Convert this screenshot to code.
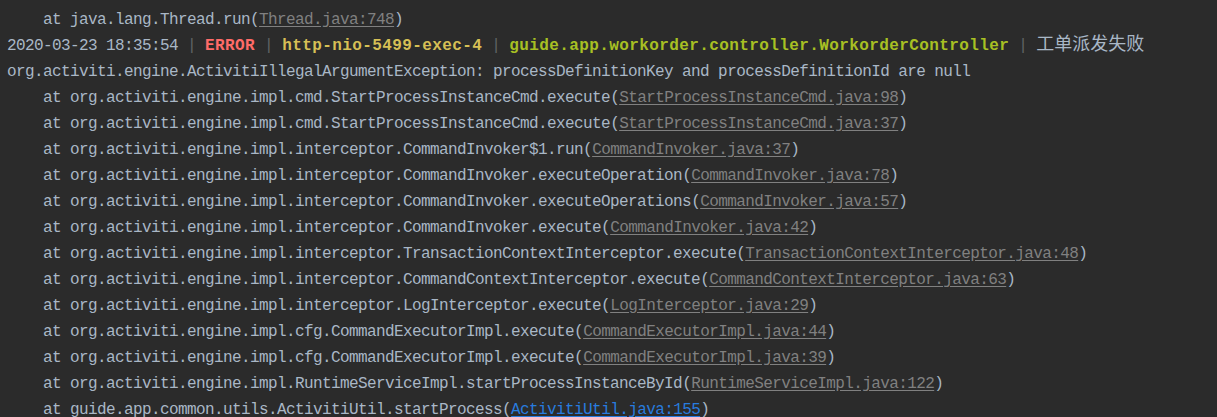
import React from 'react';

type Frame = { call: string; link: string; blue?: boolean };

const hidden: Frame = {
  call: 'org.apache.tomcat.util.threads.TaskThread$WrappingRunnable.run',
  link: 'TaskThread.java:61',
};

const frames: Frame[] = [
  { call: 'org.activiti.engine.impl.cmd.StartProcessInstanceCmd.execute', link: 'StartProcessInstanceCmd.java:98' },
  { call: 'org.activiti.engine.impl.cmd.StartProcessInstanceCmd.execute', link: 'StartProcessInstanceCmd.java:37' },
  { call: 'org.activiti.engine.impl.interceptor.CommandInvoker$1.run', link: 'CommandInvoker.java:37' },
  { call: 'org.activiti.engine.impl.interceptor.CommandInvoker.executeOperation', link: 'CommandInvoker.java:78' },
  { call: 'org.activiti.engine.impl.interceptor.CommandInvoker.executeOperations', link: 'CommandInvoker.java:57' },
  { call: 'org.activiti.engine.impl.interceptor.CommandInvoker.execute', link: 'CommandInvoker.java:42' },
  { call: 'org.activiti.engine.impl.interceptor.TransactionContextInterceptor.execute', link: 'TransactionContextInterceptor.java:48' },
  { call: 'org.activiti.engine.impl.interceptor.CommandContextInterceptor.execute', link: 'CommandContextInterceptor.java:63' },
  { call: 'org.activiti.engine.impl.interceptor.LogInterceptor.execute', link: 'LogInterceptor.java:29' },
  { call: 'org.activiti.engine.impl.cfg.CommandExecutorImpl.execute', link: 'CommandExecutorImpl.java:44' },
  { call: 'org.activiti.engine.impl.cfg.CommandExecutorImpl.execute', link: 'CommandExecutorImpl.java:39' },
  { call: 'org.activiti.engine.impl.RuntimeServiceImpl.startProcessInstanceById', link: 'RuntimeServiceImpl.java:122' },
  { call: 'guide.app.common.utils.ActivitiUtil.startProcess', link: 'ActivitiUtil.java:155', blue: true },
];

const FrameLine = ({ f }: { f: Frame }) => (
  <div className="h-[26px] whitespace-pre">
    {'    at '}
    {f.call}(
    <span className={f.blue ? 'text-[#287bde] underline underline-offset-2' : 'text-[#808080] underline underline-offset-2'}>
      {f.link}
    </span>
    )
  </div>
);

const App = () => {
  return (
    <div className="w-[1217px] h-[417px] overflow-hidden bg-[#2b2b2b]">
      <div
        className="pl-[7px] text-[16px] leading-[26px] tracking-[-0.6px] text-[#a9b7c6]"
        style={{ fontFamily: '"Liberation Mono", "Noto Sans CJK SC", monospace' }}
      >
        {/* previous frame, scrolled almost out of view */}
        <div className="h-[7px] overflow-hidden">
          <div className="-mt-[21px]">
            <FrameLine f={hidden} />
          </div>
        </div>
        <FrameLine f={{ call: 'java.lang.Thread.run', link: 'Thread.java:748' }} />
        <div className="h-[26px] whitespace-pre">
          {'2020-03-23 18:35:54 '}
          <span className="text-[#606366]">|</span>{' '}
          <span className="font-bold tracking-[0.4px] text-[#ff6b68]">ERROR</span>{' '}
          <span className="text-[#606366]">|</span>{' '}
          <span className="font-bold tracking-[0.4px] text-[#d6bf55]">http-nio-5499-exec-4</span>{' '}
          <span className="text-[#606366]">|</span>{' '}
          <span className="font-bold tracking-[0.4px] text-[#a8c023]">guide.app.workorder.controller.WorkorderController</span>{' '}
          <span className="text-[#606366]">|</span>{' '}
          <span
            className="text-[18px] leading-none tracking-normal"
            style={{ fontFamily: '"Noto Sans CJK SC", sans-serif' }}
          >
            工单派发失败
          </span>
        </div>
        <div className="h-[26px] whitespace-pre">
          org.activiti.engine.ActivitiIllegalArgumentException: processDefinitionKey and processDefinitionId are null
        </div>
        {frames.map((f, i) => (
          <FrameLine key={i} f={f} />
        ))}
      </div>
    </div>
  );
};

export default App;
